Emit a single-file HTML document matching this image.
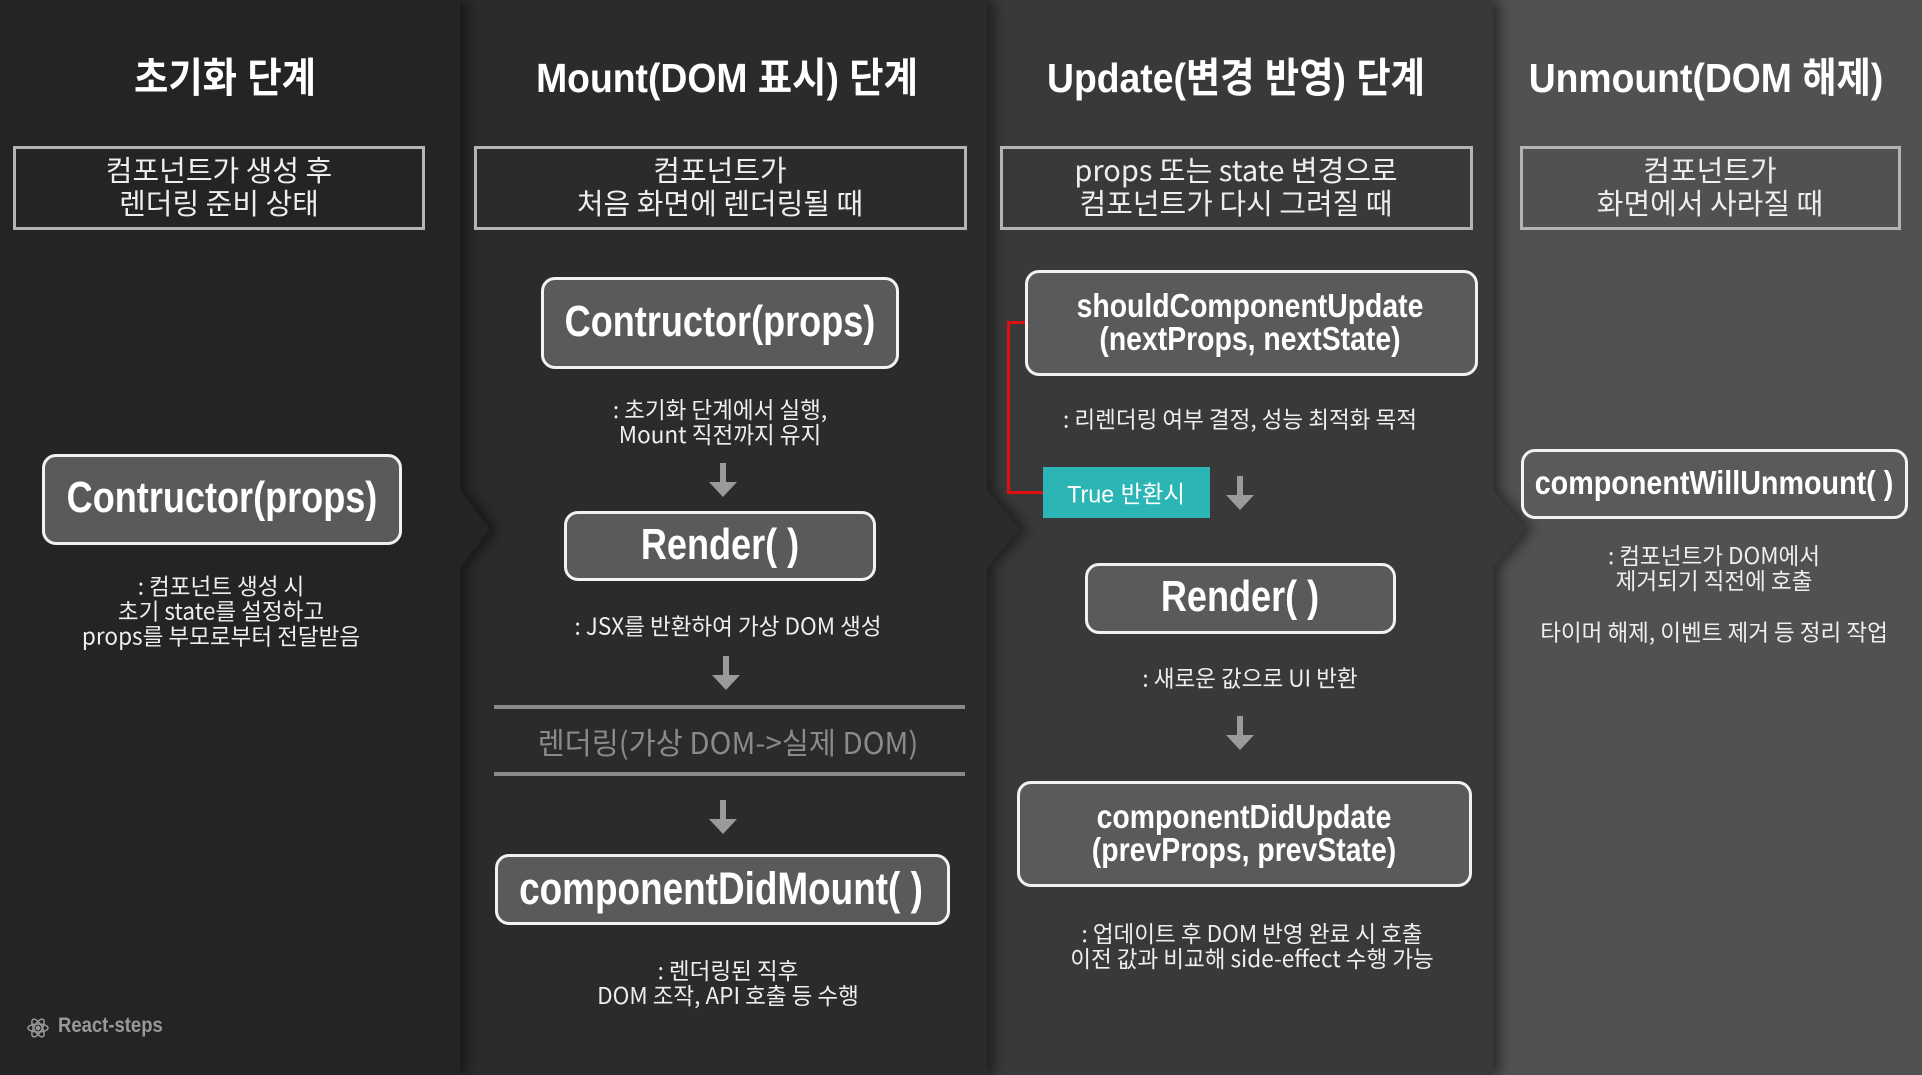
<!DOCTYPE html>
<html><head><meta charset="utf-8">
<style>
html,body{margin:0;padding:0;}
body{width:1922px;height:1075px;position:relative;overflow:hidden;background:#515151;font-family:"Liberation Sans","Noto Sans CJK KR",sans-serif;color:#f2f2f2;}
.col{position:absolute;top:0;height:1075px;}
.wrap{position:absolute;top:0;left:0;width:1922px;height:1075px;filter:drop-shadow(7px 0 6px rgba(0,0,0,.45));}
.t{position:absolute;white-space:nowrap;text-align:center;transform:translate(-50%,-50%) scaleX(.88);}
.h{font-weight:bold;font-size:41px;color:#fff;transform:translate(-50%,-50%) scaleX(.91);}
.dbox{position:absolute;border:3px solid #b4b4b4;box-sizing:border-box;}
.dt{font-size:29px;line-height:33px;color:#eee;font-family:"Noto Sans CJK KR","Liberation Sans",sans-serif;transform:translate(-50%,-50%) scaleX(1.0);}
.m{position:absolute;background:#5a5a5a;border:3px solid #f2f2f2;border-radius:14px;box-sizing:border-box;}
.mt{font-weight:bold;color:#fff;transform:translate(-50%,-50%) scaleX(.82);}
.s{font-size:23px;line-height:25px;color:#eee;font-family:"Noto Sans CJK KR","Liberation Sans",sans-serif;transform:translate(-50%,-50%) scaleX(.98);}
svg.ar{position:absolute;}
</style></head><body>
<div class="wrap"><div class="col" style="left:0;width:1526px;background:#393939;clip-path:polygon(0 0,1493px 0,1493px 490px,1526px 529px,1493px 568px,1493px 1075px,0 1075px);"></div></div>
<div class="wrap"><div class="col" style="left:0;width:1020px;background:#2b2b2b;clip-path:polygon(0 0,987px 0,987px 490px,1020px 529px,987px 568px,987px 1075px,0 1075px);"></div></div>
<div class="wrap"><div class="col" style="left:0;width:490px;background:#242424;clip-path:polygon(0 0,460px 0,460px 490px,490px 529px,460px 568px,460px 1075px,0 1075px);"></div></div>

<div class="t h" style="left:225px;top:74px;">초기화 단계</div>
<div class="t h" style="left:727px;top:74px;">Mount(DOM 표시) 단계</div>
<div class="t h" style="left:1236px;top:74px;">Update(변경 반영) 단계</div>
<div class="t h" style="left:1706px;top:74px;">Unmount(DOM 해제)</div>

<div class="dbox" style="left:13px;top:146px;width:412px;height:84px;"></div>
<div class="t dt" style="left:219px;top:186px;">컴포넌트가 생성 후<br>렌더링 준비 상태</div>
<div class="dbox" style="left:474px;top:146px;width:493px;height:84px;"></div>
<div class="t dt" style="left:720px;top:186px;">컴포넌트가<br>처음 화면에 렌더링될 때</div>
<div class="dbox" style="left:1000px;top:146px;width:473px;height:84px;"></div>
<div class="t dt" style="left:1236px;top:186px;">props 또는 state 변경으로<br>컴포넌트가 다시 그려질 때</div>
<div class="dbox" style="left:1520px;top:146px;width:381px;height:84px;"></div>
<div class="t dt" style="left:1710px;top:186px;">컴포넌트가<br>화면에서 사라질 때</div>

<div class="m" style="left:42px;top:454px;width:360px;height:91px;"></div>
<div class="t mt" style="left:222px;top:498px;font-size:44px;">Contructor(props)</div>
<div class="t s" style="left:221px;top:610px;">: 컴포넌트 생성 시<br>초기 state를 설정하고<br>props를 부모로부터 전달받음</div>
<svg style="position:absolute;left:27px;top:1017px" width="22" height="22" viewBox="0 0 22 22" fill="none" stroke="#999" stroke-width="1.5"><ellipse cx="11" cy="11" rx="10" ry="4"/><ellipse cx="11" cy="11" rx="10" ry="4" transform="rotate(60 11 11)"/><ellipse cx="11" cy="11" rx="10" ry="4" transform="rotate(-60 11 11)"/><circle cx="11" cy="11" r="1.6" fill="#999"/></svg>
<div style="position:absolute;left:58px;top:1014px;font-size:21px;font-weight:bold;color:#999;transform:scaleX(.88);transform-origin:left;">React-steps</div>

<div class="m" style="left:541px;top:277px;width:358px;height:92px;"></div>
<div class="t mt" style="left:720px;top:322px;font-size:44px;">Contructor(props)</div>
<div class="t s" style="left:720px;top:421px;">: 초기화 단계에서 실행,<br>Mount 직전까지 유지</div>
<svg class="ar" style="left:709px;top:463px" width="28" height="34"><rect x="11" y="0" width="6" height="20" fill="#9a9a9a"/><polygon points="0,19 28,19 14,34" fill="#9a9a9a"/></svg>
<div class="m" style="left:564px;top:511px;width:312px;height:70px;"></div>
<div class="t mt" style="left:720px;top:545px;font-size:44px;">Render( )</div>
<div class="t s" style="left:728px;top:625px;">: JSX를 반환하여 가상 DOM 생성</div>
<svg class="ar" style="left:712px;top:656px" width="28" height="34"><rect x="11" y="0" width="6" height="20" fill="#9a9a9a"/><polygon points="0,19 28,19 14,34" fill="#9a9a9a"/></svg>
<div style="position:absolute;left:494px;top:705px;width:471px;height:4px;background:#8a8a8a;"></div>
<div class="t" style="left:728px;top:741px;font-size:30px;color:#8a8a8a;font-family:'Noto Sans CJK KR','Liberation Sans',sans-serif;transform:translate(-50%,-50%) scaleX(.98);">렌더링(가상 DOM-&gt;실제 DOM)</div>
<div style="position:absolute;left:494px;top:772px;width:471px;height:4px;background:#8a8a8a;"></div>
<svg class="ar" style="left:709px;top:800px" width="28" height="34"><rect x="11" y="0" width="6" height="20" fill="#9a9a9a"/><polygon points="0,19 28,19 14,34" fill="#9a9a9a"/></svg>
<div class="m" style="left:495px;top:854px;width:455px;height:71px;"></div>
<div class="t mt" style="left:721px;top:889px;font-size:45px;">componentDidMount( )</div>
<div class="t s" style="left:728px;top:982px;">: 렌더링된 직후<br>DOM 조작, API 호출 등 수행</div>

<div style="position:absolute;left:1007px;top:321px;width:20px;height:3px;background:#e01010;"></div>
<div style="position:absolute;left:1007px;top:321px;width:3px;height:173px;background:#e01010;"></div>
<div style="position:absolute;left:1007px;top:491px;width:38px;height:3px;background:#e01010;"></div>
<div class="m" style="left:1025px;top:270px;width:453px;height:106px;"></div>
<div class="t mt" style="left:1250px;top:322px;font-size:33px;line-height:33px;transform:translate(-50%,-50%) scaleX(.86);">shouldComponentUpdate<br>(nextProps, nextState)</div>
<div class="t s" style="left:1240px;top:418px;">: 리렌더링 여부 결정, 성능 최적화 목적</div>
<div style="position:absolute;left:1043px;top:467px;width:167px;height:51px;background:#2bb5b5;"></div>
<div class="t" style="left:1126px;top:492px;font-size:24px;color:#fff;font-family:'Liberation Sans','Noto Sans CJK KR',sans-serif;transform:translate(-50%,-50%) scaleX(.97);">True 반환시</div>
<svg class="ar" style="left:1226px;top:476px" width="28" height="34"><rect x="11" y="0" width="6" height="20" fill="#9a9a9a"/><polygon points="0,19 28,19 14,34" fill="#9a9a9a"/></svg>
<div class="m" style="left:1085px;top:563px;width:311px;height:71px;"></div>
<div class="t mt" style="left:1240px;top:597px;font-size:44px;">Render( )</div>
<div class="t s" style="left:1250px;top:677px;">: 새로운 값으로 UI 반환</div>
<svg class="ar" style="left:1226px;top:716px" width="28" height="34"><rect x="11" y="0" width="6" height="20" fill="#9a9a9a"/><polygon points="0,19 28,19 14,34" fill="#9a9a9a"/></svg>
<div class="m" style="left:1017px;top:781px;width:455px;height:106px;"></div>
<div class="t mt" style="left:1244px;top:833px;font-size:33px;line-height:33px;transform:translate(-50%,-50%) scaleX(.86);">componentDidUpdate<br>(prevProps, prevState)</div>
<div class="t s" style="left:1252px;top:945px;">: 업데이트 후 DOM 반영 완료 시 호출<br>이전 값과 비교해 side-effect 수행 가능</div>

<div class="m" style="left:1521px;top:449px;width:387px;height:70px;"></div>
<div class="t mt" style="left:1714px;top:483px;font-size:33px;transform:translate(-50%,-50%) scaleX(.87);">componentWillUnmount( )</div>
<div class="t s" style="left:1714px;top:567px;">: 컴포넌트가 DOM에서<br>제거되기 직전에 호출</div>
<div class="t s" style="left:1714px;top:631px;">타이머 해제, 이벤트 제거 등 정리 작업</div>
</body></html>
